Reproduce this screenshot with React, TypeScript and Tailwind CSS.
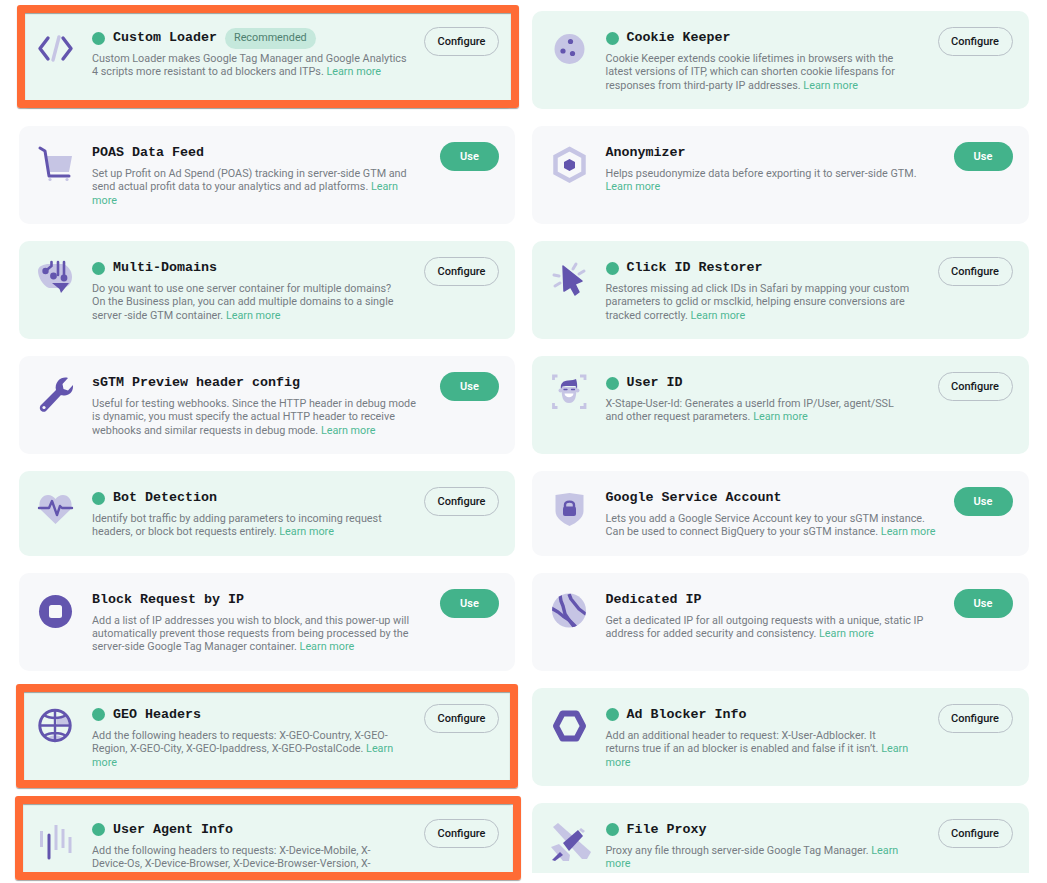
const DARK = "#6355ae";
const LIGHT = "#c6c5e4";

const iconClass = "w-[35px] h-[35px] overflow-visible";

function CodeIcon() {
  return (
    <svg viewBox="0 0 35 35" className={iconClass}>
      <path d="M10 6 2 16.5 10 27" fill="none" stroke={DARK} strokeWidth="3.4" strokeLinecap="round" strokeLinejoin="round" />
      <path d="M25 6 33 16.5 25 27" fill="none" stroke={DARK} strokeWidth="3.4" strokeLinecap="round" strokeLinejoin="round" />
      <path d="M21 5 15 28" fill="none" stroke={LIGHT} strokeWidth="3.4" strokeLinecap="round" />
    </svg>
  );
}

function CookieIcon() {
  return (
    <svg viewBox="0 0 35 35" className={iconClass}>
      <circle cx="17.5" cy="17" r="15" fill={LIGHT} />
      <circle cx="18.5" cy="9.5" r="2.6" fill={DARK} />
      <circle cx="11" cy="19" r="2.6" fill={DARK} />
      <circle cx="20.5" cy="21.5" r="2.6" fill={DARK} />
    </svg>
  );
}

function CartIcon() {
  return (
    <svg viewBox="0 0 35 35" className={iconClass}>
      <path d="M9 9H34L31 25H11Z" fill={LIGHT} />
      <path d="M2 1 7 4 11 29H31" fill="none" stroke={DARK} strokeWidth="3" strokeLinecap="round" strokeLinejoin="round" />
      <circle cx="12" cy="32.5" r="1.6" fill={LIGHT} />
      <circle cx="29" cy="32.5" r="1.6" fill={LIGHT} />
    </svg>
  );
}

function HexIcon() {
  return (
    <svg viewBox="0 0 35 35" className={iconClass}>
      <path d="M17.5 2 31.5 9.5V26L17.5 33.5 3.5 26V9.5Z" fill="none" stroke={LIGHT} strokeWidth="4.5" />
      <path d="M17.5 12 23 15V21L17.5 24 12 21V15Z" fill={DARK} />
    </svg>
  );
}

function BrainIcon() {
  return (
    <svg viewBox="0 0 35 35" className={iconClass}>
      <path d="M0 9C0 4 6 2 11 2H24C30 3 34 9 34 15 34 22 29 26 24 26H11C5 24 0 15 0 9Z" fill={LIGHT} />
      <path d="M14 21H31L23 31 21.5 27Z" fill={DARK} />
      <path d="M13.5 0V4L7.5 9M20 0V13M26 0V16" fill="none" stroke={DARK} strokeWidth="2.6" strokeLinecap="round" />
      <circle cx="7.5" cy="9" r="3.2" fill={DARK} />
      <circle cx="15.5" cy="14" r="3.4" fill={DARK} />
      <circle cx="26" cy="16" r="3.4" fill={DARK} />
    </svg>
  );
}

function CursorIcon() {
  return (
    <svg viewBox="0 0 35 35" className={iconClass}>
      <path d="M11 4 30 19 23 22 27 30 23 33 18.5 25 12 29Z" fill={DARK} stroke={DARK} strokeWidth="1.5" strokeLinejoin="round" />
      <path d="M21 7 24 2M27 12 32 9M2 13 7 14M3 24 8 21" fill="none" stroke={LIGHT} strokeWidth="3" strokeLinecap="round" />
    </svg>
  );
}

function WrenchIcon() {
  return (
    <svg viewBox="0 0 35 35" className={iconClass}>
      <path d="M20 4C23 0.5 27 0 30 1L24.5 7 25.5 12 30 13.5 35 8C35.5 13 33 18 27 18.5 25 18.7 24 18.3 23 18L8 34C5 36.5 0 33 2.5 28.5L18 13C17 10 18 6.5 20 4Z" fill={DARK} />
      <circle cx="6" cy="30.5" r="1.6" fill="#f7f8fa" />
    </svg>
  );
}

function FaceIcon() {
  return (
    <svg viewBox="0 0 35 35" className={iconClass}>
      <path d="M1.5 3V-1H5.5M28 -1H33V3M1.5 26V30.5H5.5M28 30.5H33V26" fill="none" stroke={LIGHT} strokeWidth="2.8" />
      <path d="M9.5 10C9.5 19 10.5 26 17 26 23.5 26 24.5 19 24.5 10Z" fill={LIGHT} />
      <circle cx="8.5" cy="13.5" r="2" fill={LIGHT} />
      <circle cx="25.5" cy="13.5" r="2" fill={LIGHT} />
      <path d="M9 12C8 7 11 3.5 16 3.5 20 3 22.5 3 24 2 25 5 25.5 8 25 12L23.5 9 14 9 10.5 9.5Z" fill={DARK} />
      <path d="M12 12.5H15M19.5 12.5H22.5" fill="none" stroke={DARK} strokeWidth="1.3" strokeLinecap="round" />
      <path d="M12.5 16.5H21.5C21 21.5 13 21.5 12.5 16.5Z" fill="#fff" />
    </svg>
  );
}

function HeartIcon() {
  return (
    <svg viewBox="0 0 35 35" className={iconClass}>
      <path d="M17.5 32 3 18C-1 12 3 3 10 3 13 3 16 5 17.5 7 19 5 22 3 25 3 32 3 36 12 32 18Z" fill={LIGHT} />
      <path d="M1 16H11L14 9 19 23 22 14 24 16H34" fill="none" stroke={DARK} strokeWidth="2.4" strokeLinecap="round" strokeLinejoin="round" />
    </svg>
  );
}

function ShieldIcon() {
  return (
    <svg viewBox="0 0 35 35" className={iconClass}>
      <path d="M3.5 3 17.5 1 31.5 3V19C31.5 26 24 31 17.5 34 11 31 3.5 26 3.5 19Z" fill={LIGHT} />
      <path d="M13 15V13C13 8.5 22 8.5 22 13V15" fill="none" stroke={DARK} strokeWidth="2.4" />
      <rect x="11" y="14.5" width="13" height="9.5" rx="2" fill={DARK} />
    </svg>
  );
}

function StopIcon() {
  return (
    <svg viewBox="0 0 35 35" className={iconClass}>
      <circle cx="17.5" cy="17.5" r="16.5" fill={DARK} />
      <rect x="11" y="11" width="13" height="13" rx="2.5" fill="#f7f8fa" />
    </svg>
  );
}

function IpIcon() {
  return (
    <svg viewBox="0 0 35 35" className={iconClass}>
      <defs>
        <clipPath id="ip-clip">
          <circle cx="17" cy="16.5" r="17" />
        </clipPath>
      </defs>
      <circle cx="17" cy="16.5" r="17" fill={LIGHT} />
      <g clipPath="url(#ip-clip)" fill="none" stroke={DARK} strokeWidth="3.4" strokeLinejoin="round">
        <path d="M17 0 19 5 23 10 27 15 35 21" />
        <path d="M8 1 9 7 11 12 13 20 17 26 23 34" />
        <path d="M-1 14 6 18 11 22 17 26 24 33" />
      </g>
    </svg>
  );
}

function GlobeIcon() {
  return (
    <svg viewBox="0 0 35 35" className={iconClass}>
      <path d="M19 15H31C30.5 12 29 9 27 7 24 9 21 10 19 10Z" fill={LIGHT} />
      <path d="M9 29C12 27 14 26.5 17 26.5 20 26.5 23 27 26 29 23 32 12 32 9 29Z" fill={LIGHT} />
      <circle cx="17" cy="16.5" r="15.2" fill="none" stroke={DARK} strokeWidth="3" />
      <path d="M2 16.5H32M17 2V31M6 6C12 10 22 10 28 6M6 27C12 23 22 23 28 27" fill="none" stroke={DARK} strokeWidth="2.4" />
    </svg>
  );
}

function HexRingIcon() {
  return (
    <svg viewBox="0 0 35 35" className={iconClass}>
      <path d="M10.5 4.5H24.5L31 17 24.5 29.5H10.5L4 17Z" fill="none" stroke={DARK} strokeWidth="6" strokeLinejoin="round" />
    </svg>
  );
}

function BarsIcon() {
  return (
    <svg viewBox="0 0 35 35" className={iconClass} fill="none" strokeWidth="3">
      <path d="M3.5 7V23M18 1V26M25 5V24M32 13V29" stroke={LIGHT} />
      <path d="M11 11V34" stroke={DARK} strokeLinecap="round" />
    </svg>
  );
}

function PinIcon() {
  return (
    <svg viewBox="0 0 35 35" className={iconClass}>
      <path d="M1 3 6 -1 39 28 35 35 30 35Z" fill={LIGHT} />
      <path d="M-1 23 7 20 18 31 17 37H11Z" fill={LIGHT} />
      <path d="M11 19 26 6 31 12 17 27Z" fill={DARK} />
      <path d="M29 4 33 7 31 9 27 6Z" fill={LIGHT} />
      <path d="M0 36 8 28 11 31 3 37Z" fill={DARK} />
    </svg>
  );
}

type Item = {
  title: string;
  lines: string[];
  more?: string;
  icon: React.ReactNode;
  on?: boolean;
  badge?: boolean;
  action: "Configure" | "Use";
};

const items: Item[] = [
  { title: "Custom Loader", badge: true, on: true, action: "Configure", icon: <CodeIcon />, lines: ["Custom Loader makes Google Tag Manager and Google Analytics", "4 scripts more resistant to ad blockers and ITPs."] },
  { title: "Cookie Keeper", on: true, action: "Configure", icon: <CookieIcon />, lines: ["Cookie Keeper extends cookie lifetimes in browsers with the", "latest versions of ITP, which can shorten cookie lifespans for", "responses from third-party IP addresses."] },
  { title: "POAS Data Feed", action: "Use", icon: <CartIcon />, more: "split", lines: ["Set up Profit on Ad Spend (POAS) tracking in server-side GTM and", "send actual profit data to your analytics and ad platforms."] },
  { title: "Anonymizer", action: "Use", icon: <HexIcon />, more: "next", lines: ["Helps pseudonymize data before exporting it to server-side GTM."] },
  { title: "Multi-Domains", on: true, action: "Configure", icon: <BrainIcon />, lines: ["Do you want to use one server container for multiple domains?", "On the Business plan, you can add multiple domains to a single", "server -side GTM container."] },
  { title: "Click ID Restorer", on: true, action: "Configure", icon: <CursorIcon />, lines: ["Restores missing ad click IDs in Safari by mapping your custom", "parameters to gclid or msclkid, helping ensure conversions are", "tracked correctly."] },
  { title: "sGTM Preview header config", action: "Use", icon: <WrenchIcon />, lines: ["Useful for testing webhooks. Since the HTTP header in debug mode", "is dynamic, you must specify the actual HTTP header to receive", "webhooks and similar requests in debug mode."] },
  { title: "User ID", on: true, action: "Configure", icon: <FaceIcon />, lines: ["X-Stape-User-Id: Generates a userId from IP/User, agent/SSL", "and other request parameters."] },
  { title: "Bot Detection", on: true, action: "Configure", icon: <HeartIcon />, lines: ["Identify bot traffic by adding parameters to incoming request", "headers, or block bot requests entirely."] },
  { title: "Google Service Account", action: "Use", icon: <ShieldIcon />, lines: ["Lets you add a Google Service Account key to your sGTM instance.", "Can be used to connect BigQuery to your sGTM instance."] },
  { title: "Block Request by IP", action: "Use", icon: <StopIcon />, lines: ["Add a list of IP addresses you wish to block, and this power-up will", "automatically prevent those requests from being processed by the", "server-side Google Tag Manager container."] },
  { title: "Dedicated IP", action: "Use", icon: <IpIcon />, lines: ["Get a dedicated IP for all outgoing requests with a unique, static IP", "address for added security and consistency."] },
  { title: "GEO Headers", on: true, action: "Configure", icon: <GlobeIcon />, more: "split", lines: ["Add the following headers to requests: X-GEO-Country, X-GEO-", "Region, X-GEO-City, X-GEO-Ipaddress, X-GEO-PostalCode."] },
  { title: "Ad Blocker Info", on: true, action: "Configure", icon: <HexRingIcon />, more: "split", lines: ["Add an additional header to request: X-User-Adblocker. It", "returns true if an ad blocker is enabled and false if it isn’t."] },
  { title: "User Agent Info", on: true, action: "Configure", icon: <BarsIcon />, more: "none", lines: ["Add the following headers to requests: X-Device-Mobile, X-", "Device-Os, X-Device-Browser, X-Device-Browser-Version, X-"] },
  { title: "File Proxy", on: true, action: "Configure", icon: <PinIcon />, more: "split", lines: ["Proxy any file through server-side Google Tag Manager."] },
];

function Description({ item }: { item: Item }) {
  const last = item.lines.length - 1;
  const link = "text-[#4fb894]";
  return (
    <p className="mt-[3px] text-[10.8px] leading-[13.4px] text-[#767c83]">
      {item.lines.map((line, i) => (
        <span key={i} className="block whitespace-nowrap">
          {line}
          {i === last && !item.more && <span className={link}> Learn more</span>}
          {i === last && item.more === "split" && <span className={link}> Learn</span>}
        </span>
      ))}
      {item.more === "split" && <span className={`block ${link}`}>more</span>}
      {item.more === "next" && <span className={`block ${link}`}>Learn more</span>}
    </p>
  );
}

function Card({ item }: { item: Item }) {
  return (
    <div className={`flex items-start rounded-[10px] pl-[19.5px] pr-4 pt-4 pb-[16.8px] ${item.on ? "bg-[#eaf7f2]" : "bg-[#f7f8fa]"}`}>
      <div className="mt-[5px] mr-[19px] w-[35px] h-[35px] shrink-0">{item.icon}</div>
      <div className="flex-1 min-w-0">
        <div className="flex items-center h-[22px]">
          {item.on && <span className="mr-2 w-[13px] h-[13px] rounded-full bg-[#43b38b]" />}
          <h3 className="text-[13.33px] font-bold text-[#16171c] font-['Liberation_Mono',monospace]">{item.title}</h3>
          {item.badge && (
            <span className="ml-2 h-[21px] px-[9px] flex items-center rounded-full bg-[#c5e8dc] text-[10.8px] text-[#4e7f70]">
              Recommended
            </span>
          )}
        </div>
        <Description item={item} />
      </div>
      {item.action === "Configure" ? (
        <button className="shrink-0 w-[75px] h-[29px] pt-[2px] rounded-full border border-[#b9c1c8] text-[11px] font-medium text-[#16171c]">
          Configure
        </button>
      ) : (
        <button className="shrink-0 w-[59px] h-[29px] pt-[2px] rounded-full bg-[#43b38b] text-[11px] font-semibold text-white">
          Use
        </button>
      )}
    </div>
  );
}

export default function App() {
  return (
    <div className="relative w-[1047px] h-[883px] bg-white overflow-hidden font-['Roboto',sans-serif]">
      <div className="h-[873px] overflow-hidden pt-[11px] pl-[18.5px] pr-[18.5px]">
        <div className="grid grid-cols-2 gap-x-[17px] gap-y-[17px]">
          {items.map((item) => (
            <Card key={item.title} item={item} />
          ))}
        </div>
      </div>
      <div className="absolute left-[17px] top-[5px] w-[502px] h-[103px] rounded-[3px] border-[8px] border-[#ff6b35] shadow-[0_1px_1px_rgba(0,0,0,0.35),inset_0_1px_1px_rgba(0,0,0,0.35)]" />
      <div className="absolute left-[16px] top-[684px] w-[502px] h-[104px] rounded-[3px] border-[8px] border-[#ff6b35] shadow-[0_1px_1px_rgba(0,0,0,0.35),inset_0_1px_1px_rgba(0,0,0,0.35)]" />
      <div className="absolute left-[15px] top-[796px] w-[506px] h-[84px] rounded-[3px] border-[8px] border-[#ff6b35] shadow-[0_1px_1px_rgba(0,0,0,0.35),inset_0_1px_1px_rgba(0,0,0,0.35)]" />
    </div>
  );
}
